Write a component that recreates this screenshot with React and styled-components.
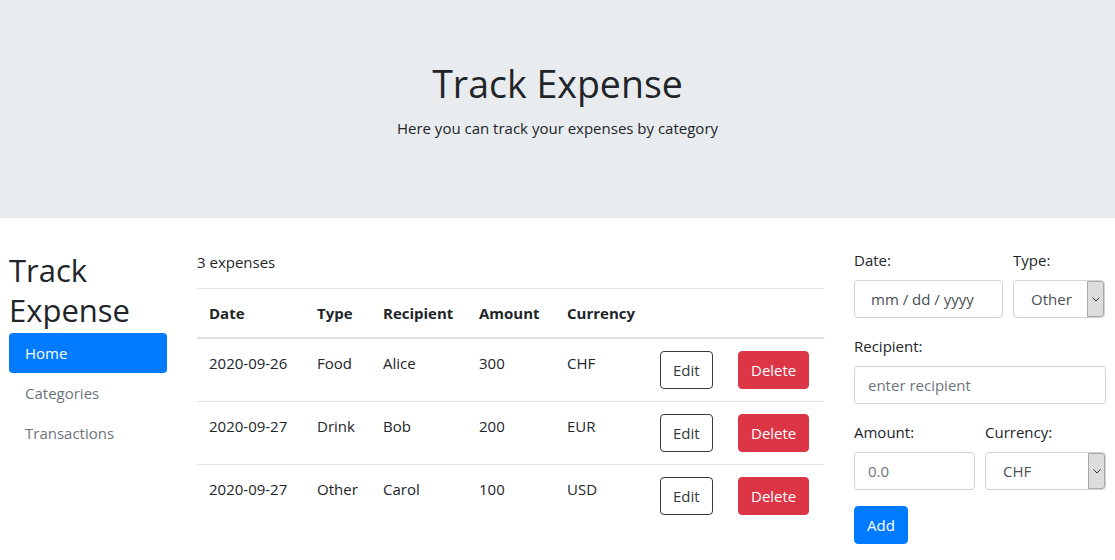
import React from 'react'
import styled, { createGlobalStyle } from 'styled-components'

const GlobalStyle = createGlobalStyle`
  body {
    margin: 0;
    font-family: 'Open Sans', 'Liberation Sans', sans-serif;
    font-size: 15px;
    line-height: 1.6;
    color: #212529;
    background: #fff;
  }
  * { box-sizing: border-box; }
`

const Jumbotron = styled.header`
  background: #e9ecef;
  height: 218px;
  padding-top: 60px;
  text-align: center;
`

const Title = styled.h1`
  margin: 0 0 8px;
  font-size: 37.5px;
  font-weight: 400;
  line-height: 48px;
`

const Lead = styled.p`
  margin: 0;
  font-size: 15px;
  line-height: 24px;
`

const Main = styled.main`
  display: grid;
  grid-template-columns: 158px 627px 252px;
  column-gap: 30px;
  padding: 32px 9px 0;
  align-items: start;
`

const SideTitle = styled.h2`
  margin: 0 0 3px;
  font-size: 31px;
  font-weight: 400;
  line-height: 40px;
`

const Nav = styled.nav`
  display: flex;
  flex-direction: column;
`

const NavLink = styled.a`
  display: block;
  padding: 8px 16px;
  border-radius: 4px;
  line-height: 24px;
  text-decoration: none;
  color: ${p => (p.$active ? '#fff' : '#6c757d')};
  background: ${p => (p.$active ? '#007bff' : 'transparent')};
`

const Count = styled.p`
  margin: 0 0 14px;
  line-height: 24px;
`

const Table = styled.table`
  width: 100%;
  border-collapse: collapse;
  table-layout: fixed;

  th, td {
    padding: 12px;
    border-top: 1px solid #dee2e6;
    text-align: left;
    line-height: 24px;
    vertical-align: top;
  }

  thead th {
    font-weight: 700;
    vertical-align: bottom;
    border-bottom: 2px solid #dee2e6;
  }
`

const variants = {
  outline: { border: '#343a40', bg: '#fff', color: '#343a40' },
  danger: { border: '#dc3545', bg: '#dc3545', color: '#fff' },
  primary: { border: '#007bff', bg: '#007bff', color: '#fff' }
}

const Btn = styled.button`
  display: inline-block;
  font-family: inherit;
  font-size: 15px;
  line-height: 24px;
  padding: 6px 12px;
  border-radius: 4px;
  border: 1px solid ${p => variants[p.$variant].border};
  background: ${p => variants[p.$variant].bg};
  color: ${p => variants[p.$variant].color};
  vertical-align: middle;
  cursor: pointer;
`

const Form = styled.form`
  display: flex;
  flex-direction: column;
  margin-top: -2px;
`

const FormRow = styled.div`
  display: grid;
  grid-template-columns: ${p => p.$cols || '1fr'};
  column-gap: 10px;
  margin-bottom: 16px;
`

const Group = styled.div`
  display: flex;
  flex-direction: column;
`

const Label = styled.label`
  line-height: 24px;
  margin-bottom: 8px;
`

const Input = styled.input`
  height: 38px;
  width: 100%;
  padding: 6px 12px 6px ${p => (p.$date ? '16px' : '13px')};
  font-family: inherit;
  font-size: 15px;
  color: #495057;
  border: 1px solid #ced4da;
  border-radius: 4px;
  background: #fff;

  &::placeholder {
    color: ${p => (p.$date ? '#495057' : '#6c757d')};
    opacity: 1;
  }
`

const SelectWrap = styled.div`
  position: relative;
  height: 38px;
`

const Select = styled.select`
  appearance: none;
  width: 100%;
  height: 38px;
  padding: 6px 20px 6px 17px;
  font-family: inherit;
  font-size: 15px;
  color: #495057;
  border: 1px solid #ced4da;
  border-radius: 4px;
  background: #fff;
`

const Arrow = styled.span`
  position: absolute;
  top: 1px;
  right: 1px;
  bottom: 1px;
  width: 17px;
  background: #dddddd;
  border: 1px solid #a9a9a9;
  border-radius: 0 3px 3px 0;
  display: flex;
  align-items: center;
  justify-content: center;
  pointer-events: none;
`

const Chevron = () => (
  <svg width='8' height='5' viewBox='0 0 8 5'>
    <path d='M0.5 0.5 L4 4 L7.5 0.5' fill='none' stroke='#333' strokeWidth='1' />
  </svg>
)

const expenses = [
  { date: '2020-09-26', type: 'Food', recipient: 'Alice', amount: 300, currency: 'CHF' },
  { date: '2020-09-27', type: 'Drink', recipient: 'Bob', amount: 200, currency: 'EUR' },
  { date: '2020-09-27', type: 'Other', recipient: 'Carol', amount: 100, currency: 'USD' }
]

const SelectField = ({ value, options }) => (
  <SelectWrap>
    <Select defaultValue={value}>
      {options.map(o => <option key={o}>{o}</option>)}
    </Select>
    <Arrow><Chevron /></Arrow>
  </SelectWrap>
)

export default function App () {
  return (
    <>
      <GlobalStyle />
      <Jumbotron>
        <Title>Track Expense</Title>
        <Lead>Here you can track your expenses by category</Lead>
      </Jumbotron>
      <Main>
        <aside>
          <SideTitle>Track<br />Expense</SideTitle>
          <Nav>
            <NavLink href='#' $active>Home</NavLink>
            <NavLink href='#'>Categories</NavLink>
            <NavLink href='#'>Transactions</NavLink>
          </Nav>
        </aside>
        <section>
          <Count>{expenses.length} expenses</Count>
          <Table>
            <colgroup>
              <col style={{ width: 108 }} />
              <col style={{ width: 66 }} />
              <col style={{ width: 96 }} />
              <col style={{ width: 88 }} />
              <col style={{ width: 93 }} />
              <col style={{ width: 78 }} />
              <col style={{ width: 98 }} />
            </colgroup>
            <thead>
              <tr>
                <th>Date</th>
                <th>Type</th>
                <th>Recipient</th>
                <th>Amount</th>
                <th>Currency</th>
                <th />
                <th />
              </tr>
            </thead>
            <tbody>
              {expenses.map((e, i) => (
                <tr key={i}>
                  <td>{e.date}</td>
                  <td>{e.type}</td>
                  <td>{e.recipient}</td>
                  <td>{e.amount}</td>
                  <td>{e.currency}</td>
                  <td><Btn type='button' $variant='outline'>Edit</Btn></td>
                  <td><Btn type='button' $variant='danger'>Delete</Btn></td>
                </tr>
              ))}
            </tbody>
          </Table>
        </section>
        <Form onSubmit={e => e.preventDefault()}>
          <FormRow $cols='149px 92px'>
            <Group>
              <Label>Date:</Label>
              <Input $date placeholder='mm / dd / yyyy' />
            </Group>
            <Group>
              <Label>Type:</Label>
              <SelectField value='Other' options={['Food', 'Drink', 'Other']} />
            </Group>
          </FormRow>
          <FormRow>
            <Group>
              <Label>Recipient:</Label>
              <Input placeholder='enter recipient' />
            </Group>
          </FormRow>
          <FormRow $cols='121px 121px'>
            <Group>
              <Label>Amount:</Label>
              <Input placeholder='0.0' />
            </Group>
            <Group>
              <Label>Currency:</Label>
              <SelectField value='CHF' options={['CHF', 'EUR', 'USD']} />
            </Group>
          </FormRow>
          <div>
            <Btn type='submit' $variant='primary'>Add</Btn>
          </div>
        </Form>
      </Main>
    </>
  )
}
